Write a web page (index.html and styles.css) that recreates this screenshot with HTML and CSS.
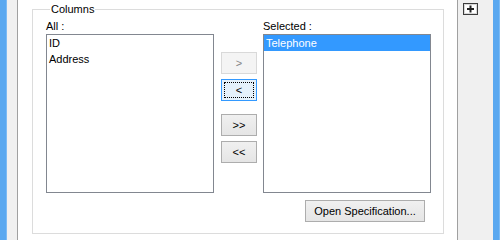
FILE: index.html
```html
<!DOCTYPE html>
<html lang="en">
<head>
  <meta charset="UTF-8">
  <title>Columns</title>
  <link rel="stylesheet" href="styles.css">
</head>
<body>
  <div class="window">
    <div class="edge"></div>
    <div class="side side-left"></div>
    <div class="content">
      <fieldset class="group">
        <legend class="group-title">Columns</legend>
        <div class="columns">
          <div class="list-col">
            <div class="list-label">All :</div>
            <div class="listbox">
              <div class="list-item">ID</div>
              <div class="list-item">Address</div>
            </div>
          </div>
          <div class="move-buttons">
            <button class="btn btn-move" disabled>&gt;</button>
            <button class="btn btn-move focused"><span class="focus-rect">&lt;</span></button>
            <button class="btn btn-move spaced">&gt;&gt;</button>
            <button class="btn btn-move">&lt;&lt;</button>
          </div>
          <div class="list-col">
            <div class="list-label">Selected :</div>
            <div class="listbox">
              <div class="list-item selected">Telephone</div>
            </div>
            <div class="spec-row">
              <button class="btn btn-spec">Open Specification...</button>
            </div>
          </div>
        </div>
      </fieldset>
    </div>
    <div class="side side-right">
      <!-- expand icon -->
      <svg class="expand-icon" width="15" height="12" viewBox="0 0 15 12">
        <rect x="0.5" y="0.5" width="14" height="11" fill="#fff" stroke="#3c3c3c"/>
        <rect x="1.5" y="1.5" width="12" height="9" fill="none" stroke="#d8d8d8"/>
        <path d="M7.5 2.5v7M4 6h7" stroke="#222" stroke-width="2"/>
      </svg>
    </div>
    <div class="edge"></div>
  </div>
</body>
</html>
```

FILE: styles.css
```css
body {
  margin: 0;
  font-family: "Liberation Sans", Arial, sans-serif;
  font-size: 11px;
  color: #000;
  background-color: #fff;
}

.window {
  display: flex;
  height: 240px;
  width: 500px;
}

.edge {
  width: 7px;
  background-color: #5aa8f0;
  box-shadow: inset -1px 0 0 #7cbaf4;
}

.side {
  background-color: #f0f0f0;
}

.side-left {
  width: 10px;
  border-right: 1px solid #a0a0a0;
}

.side-right {
  width: 36px;
  border-left: 1px solid #a0a0a0;
  padding-top: 3px;
  box-sizing: border-box;
}

.expand-icon {
  display: block;
  margin-left: 5px;
}

.content {
  flex: 1;
  background-color: #fff;
  padding: 3px 13px 0 14px;
}

.group {
  margin: 0;
  padding: 3px 12px 10px 13px;
  border: 1px solid #dcdcdc;
  height: 231px;
  box-sizing: border-box;
}

.group-title {
  padding: 0 1px;
  margin-left: 4px;
  line-height: 13px;
}

.columns {
  display: flex;
}

.list-col {
  display: flex;
  flex-direction: column;
}

.list-label {
  height: 15px;
  line-height: 14px;
}

.listbox {
  width: 166px;
  height: 157px;
  border: 1px solid #828790;
  background-color: #fff;
}

.list-item {
  height: 16px;
  line-height: 16px;
  padding-left: 2px;
}

.list-item.selected {
  background-color: #3399ff;
  color: #fff;
}

.move-buttons {
  display: flex;
  flex-direction: column;
  gap: 5px;
  width: 36px;
  margin: 33px 6px 0 7px;
}

.btn {
  font-family: "Liberation Sans", Arial, sans-serif;
  font-size: 11px;
  color: #000;
  height: 22px;
  padding: 0;
  border: 1px solid #adadad;
  background: linear-gradient(#f0f0f0, #e5e5e5);
  box-sizing: border-box;
}

.btn:disabled {
  color: #838383;
  border-color: #d9d9d9;
  background: #f4f4f4;
}

.btn-move {
  width: 36px;
}

.btn-move.spaced {
  margin-top: 8px;
}

.btn.focused {
  border-color: #3399ff;
  background: #e5f1fb;
  padding: 2px;
}

.focus-rect {
  display: block;
  height: 100%;
  line-height: 14px;
  border: 1px dotted #000;
  box-sizing: border-box;
}

.spec-row {
  display: flex;
  justify-content: flex-end;
  margin-top: 7px;
  padding-right: 6px;
}

.btn-spec {
  width: 120px;
}
```
